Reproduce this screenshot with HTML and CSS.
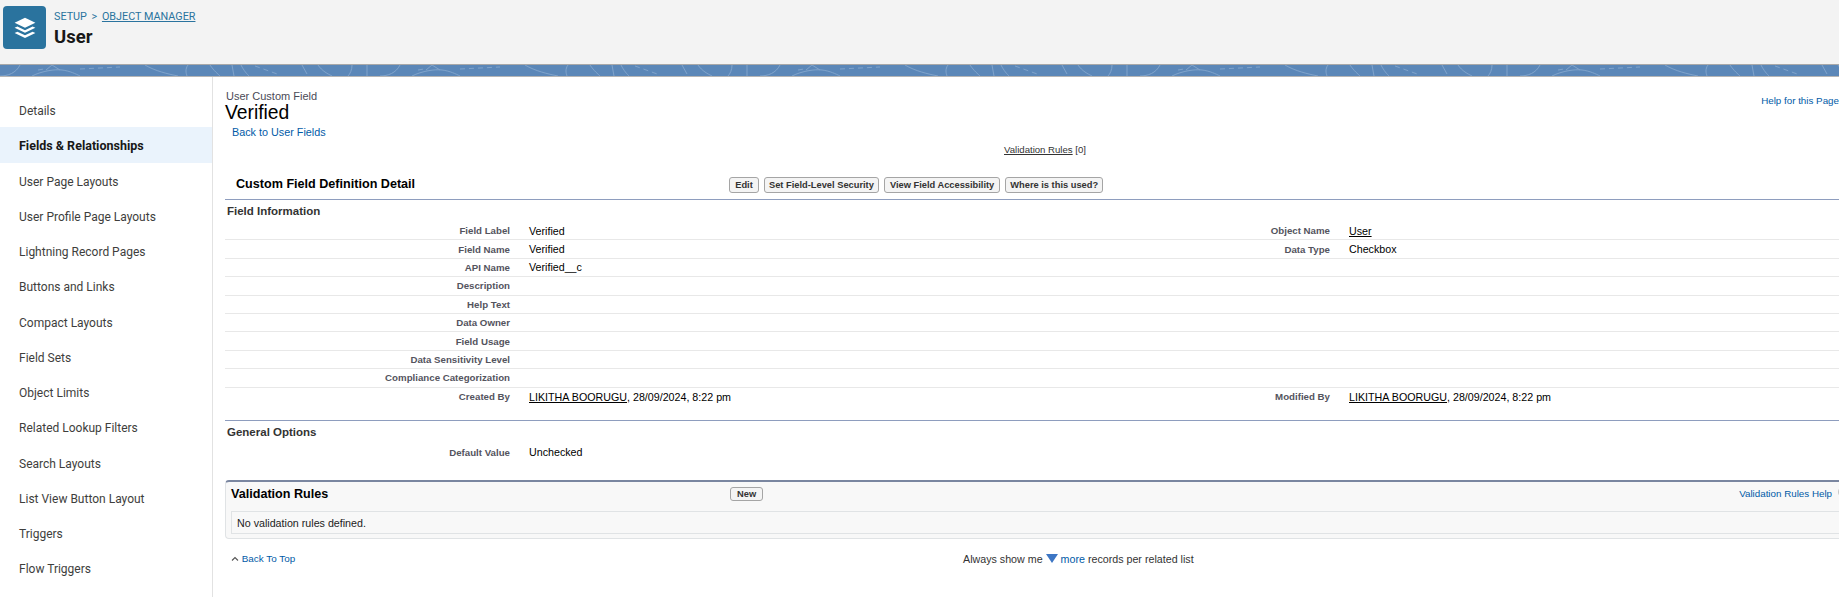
FILE: index.html
```html
<!DOCTYPE html>
<html lang="en">
<head>
  <meta charset="UTF-8">
  <title>User | Object Manager</title>
  <link rel="stylesheet" href="styles.css">
</head>
<body>

  <header class="top">
    <div class="obj-icon">
      <svg viewBox="0 0 24 24" width="26" height="26">
        <path fill="#fff" d="M12 2.6 21.6 7.2 12 11.8 2.4 7.2Z"/>
        <path fill="#fff" d="M5 10.6 12 14 19 10.6 21.6 11.8 12 16.4 2.4 11.8Z"/>
        <path fill="#fff" d="M5 15.4 12 18.8 19 15.4 21.6 16.6 12 21.2 2.4 16.6Z"/>
      </svg>
    </div>
    <div>
      <div class="crumbs">SETUP <span class="gt">&gt;</span> <a href="#">OBJECT MANAGER</a></div>
      <div class="obj-name">User</div>
    </div>
  </header>

  <div class="band">
    <svg width="1839" height="11">
      <defs>
        <pattern id="swirl" width="380" height="11" patternUnits="userSpaceOnUse">
          <g fill="none" stroke="#7fa3cb">
            <path d="M0 11C8 11 16 8 20 0M32 11C42 6 55 4 62 5 70 6 76 9 80 11M46 5 52 0 60 5"/>
            <path d="M38 5 44 4M80 4 120 2" stroke-dasharray="5 4"/>
            <path d="M145 0C155 6 168 9 178 11M188 0C185 4 186 8 187 11M210 0C214 6 218 9 220 11M232 0 234 11M241 0C244 6 247 9 249 11"/>
            <path d="M255 1 280 10" stroke-dasharray="5 4"/>
            <path d="M302 0 307 9M318 0C322 6 328 9 332 11M352 0C352 5 350 9 348 11M367 0V11"/>
          </g>
        </pattern>
      </defs>
      <rect width="1839" height="11" fill="url(#swirl)"/>
    </svg>
  </div>

  <div class="layout">
    <nav class="side">
      <a href="#">Details</a>
      <a href="#" class="active">Fields &amp; Relationships</a>
      <a href="#">User Page Layouts</a>
      <a href="#">User Profile Page Layouts</a>
      <a href="#">Lightning Record Pages</a>
      <a href="#">Buttons and Links</a>
      <a href="#">Compact Layouts</a>
      <a href="#">Field Sets</a>
      <a href="#">Object Limits</a>
      <a href="#">Related Lookup Filters</a>
      <a href="#">Search Layouts</a>
      <a href="#">List View Button Layout</a>
      <a href="#">Triggers</a>
      <a href="#">Flow Triggers</a>
    </nav>

    <main class="main">
      <div class="title-row">
        <div>
          <div class="type">User Custom Field</div>
          <h1>Verified</h1>
        </div>
        <a href="#" class="help">Help for this Page</a>
      </div>
      <a href="#" class="back">Back to User Fields</a>
      <div class="rel-links"><a href="#">Validation Rules</a> [0]</div>

      <div class="detail-head">
        <h2>Custom Field Definition Detail</h2>
        <div class="btns">
          <button class="edit">Edit</button>
          <button>Set Field-Level Security</button>
          <button class="wide">View Field Accessibility</button>
          <button>Where is this used?</button>
        </div>
      </div>

      <h3>Field Information</h3>
      <div class="fields">
        <div class="row">
          <span class="lbl">Field Label</span><span class="val">Verified</span>
          <span class="lbl">Object Name</span><span class="val"><a href="#">User</a></span>
        </div>
        <div class="row">
          <span class="lbl">Field Name</span><span class="val">Verified</span>
          <span class="lbl">Data Type</span><span class="val">Checkbox</span>
        </div>
        <div class="row">
          <span class="lbl">API Name</span><span class="val">Verified__c</span>
          <span class="lbl"></span><span class="val"></span>
        </div>
        <div class="row">
          <span class="lbl">Description</span><span class="val"></span>
          <span class="lbl"></span><span class="val"></span>
        </div>
        <div class="row">
          <span class="lbl">Help Text</span><span class="val"></span>
          <span class="lbl"></span><span class="val"></span>
        </div>
        <div class="row">
          <span class="lbl">Data Owner</span><span class="val"></span>
          <span class="lbl"></span><span class="val"></span>
        </div>
        <div class="row">
          <span class="lbl">Field Usage</span><span class="val"></span>
          <span class="lbl"></span><span class="val"></span>
        </div>
        <div class="row">
          <span class="lbl">Data Sensitivity Level</span><span class="val"></span>
          <span class="lbl"></span><span class="val"></span>
        </div>
        <div class="row">
          <span class="lbl">Compliance Categorization</span><span class="val"></span>
          <span class="lbl"></span><span class="val"></span>
        </div>
        <div class="row last">
          <span class="lbl">Created By</span><span class="val"><a href="#">LIKITHA BOORUGU</a>, 28/09/2024, 8:22 pm</span>
          <span class="lbl">Modified By</span><span class="val"><a href="#">LIKITHA BOORUGU</a>, 28/09/2024, 8:22 pm</span>
        </div>
      </div>

      <h3 class="options">General Options</h3>
      <div class="fields">
        <div class="row last">
          <span class="lbl">Default Value</span><span class="val">Unchecked</span>
          <span class="lbl"></span><span class="val"></span>
        </div>
      </div>

      <section class="related">
        <div class="related-head">
          <h2>Validation Rules</h2>
          <button>New</button>
          <a href="#" class="related-help">Validation Rules Help</a>
          <span class="help-dot"></span>
        </div>
        <div class="related-body">No validation rules defined.</div>
      </section>

      <div class="foot">
        <a href="#" class="to-top">
          <svg class="caret" width="8" height="5" viewBox="0 0 8 5"><path d="M1 4.5 4 1.5 7 4.5" fill="none" stroke="#555" stroke-width="1.1"/></svg>
          Back To Top
        </a>
        <div class="show-more">Always show me <span class="tri"></span> <a href="#">more</a> records per related list</div>
      </div>
    </main>
  </div>

</body>
</html>
```

FILE: styles.css
```css
html, body {
  margin: 0;
  height: 597px;
  overflow: hidden;
  background-color: #fff;
}
body {
  font-family: "Liberation Sans", Arial, sans-serif;
  color: #000;
}
a {
  color: inherit;
}

/* top bar */
.top {
  display: flex;
  align-items: flex-start;
  gap: 8px;
  box-sizing: border-box;
  height: 65px;
  padding: 6px 0 0 3px;
  background-color: #f3f3f3;
  border-bottom: 1px solid #a8a8a8;
  font-family: Roboto, sans-serif;
}
.obj-icon {
  display: flex;
  align-items: center;
  justify-content: center;
  width: 43px;
  height: 43px;
  border-radius: 4px;
  background-color: #2a739e;
}
.crumbs {
  font-size: 10.8px;
  line-height: 16px;
  margin-top: 3px;
  color: #2a739e;
}
.gt {
  margin: 0 2px;
}
.obj-name {
  font-size: 18.5px;
  font-weight: 700;
  line-height: 24px;
  color: #181818;
}
.band {
  height: 11px;
  background-color: #5b87b8;
  border-bottom: 1px solid #b5b5b5;
  overflow: hidden;
}
.band svg {
  display: block;
}

/* layout */
.layout {
  display: flex;
}
.side {
  flex: none;
  box-sizing: border-box;
  width: 213px;
  height: 520px;
  padding-top: 15px;
  border-right: 1px solid #e2e2e2;
  font-family: Roboto, sans-serif;
  font-size: 12px;
}
.side a {
  display: block;
  height: 35.27px;
  line-height: 39.5px;
  padding-left: 19px;
  color: #3e3e3c;
  text-decoration: none;
}
.side a.active {
  font-size: 12.5px;
  font-weight: 700;
  line-height: 37.5px;
  color: #181818;
  background-color: #eaf3fc;
}
.main {
  flex: none;
  width: 1656px;
  margin-left: 12px;
  padding-top: 14px;
  font-size: 11px;
}

/* title */
.title-row {
  display: flex;
  justify-content: space-between;
  width: 1614px;
}
.type {
  font-size: 11px;
  line-height: 11px;
  margin-bottom: 1px;
  color: #4a4a56;
  padding-left: 1px;
}
h1 {
  margin: 0;
  font-size: 19.3px;
  font-weight: 400;
  line-height: 20px;
}
.help {
  font-size: 9.8px;
  color: #015ba7;
  text-decoration: none;
  margin-top: 4px;
}
.back {
  display: block;
  margin: 2px 0 0 7px;
  font-size: 10.8px;
  line-height: 15px;
  color: #015ba7;
  text-decoration: none;
}
.rel-links {
  width: 1640px;
  text-align: center;
  font-size: 9.6px;
  line-height: 12px;
  margin-top: 4px;
  color: #333;
}

/* detail block */
.detail-head {
  display: flex;
  align-items: center;
  height: 22px;
  margin-top: 17px;
  padding-bottom: 4px;
  border-bottom: 1px solid #8e9dbe;
}
.detail-head h2 {
  margin: 0 0 0 11px;
  width: 493px;
  font-size: 12.6px;
  line-height: 18px;
}
.btns {
  display: flex;
  gap: 5px;
  margin-top: 2px;
}
button {
  font-family: "Liberation Sans", Arial, sans-serif;
  font-size: 9.3px;
  font-weight: 700;
  line-height: 12px;
  height: 16px;
  padding: 0 4px;
  color: #333;
  background-color: #f4f4f4;
  border: 1px solid #a5a5a5;
  border-radius: 3px;
}
button.edit {
  min-width: 30px;
}
button.wide {
  padding: 0 5px;
}
h3 {
  margin: 0;
  padding: 3px 0 0 2px;
  font-size: 11.5px;
  font-weight: 700;
  line-height: 16px;
  color: #333;
}
h3.options {
  margin-top: 14px;
  border-top: 1px solid #8e9dbe;
  padding-top: 3px;
}
.fields {
  margin-top: 3px;
}
.row {
  display: grid;
  grid-template-columns: 295px 525px 295px 525px;
  height: 18.4px;
  border-bottom: 1px solid #e8e8e8;
  box-sizing: border-box;
  align-items: center;
}
.row.last {
  border-bottom: none;
}
.lbl {
  text-align: right;
  padding-right: 10px;
  font-size: 9.7px;
  font-weight: 700;
  color: #54545e;
}
.val {
  padding-left: 9px;
  font-size: 10.7px;
}

/* related list */
.related {
  margin-top: 19px;
  height: 59px;
  box-sizing: border-box;
  background-color: #f8f8f8;
  border: 1px solid #e0e3e5;
  border-top: 2px solid #7a86a0;
  border-radius: 4px 0 0 4px;
  border-right: none;
  padding: 0 0 4px 5px;
}
.related-head {
  display: flex;
  align-items: center;
  box-sizing: border-box;
  height: 29px;
  padding-bottom: 6px;
  position: relative;
}
.related-head h2 {
  margin: 0;
  width: 499px;
  font-size: 12.6px;
}
.related-head button {
  height: 14px;
  padding: 0 6px;
  line-height: 10px;
}
.related-help {
  margin-left: 976px;
  font-size: 9.8px;
  color: #015ba7;
  text-decoration: none;
}
.related-body {
  box-sizing: border-box;
  height: 23px;
  line-height: 22px;
  padding-left: 5px;
  font-size: 10.7px;
  background-color: #f8f8f8;
  border: 1px solid #e0e3e5;
  border-right: none;
  color: #222;
}
.help-dot {
  position: absolute;
  left: 1607px;
  top: 4px;
  width: 10px;
  height: 10px;
  border: 1.5px solid #c4c4c4;
  border-radius: 50%;
}

/* footer */
.foot {
  display: flex;
  margin-top: 13px;
  font-size: 9.9px;
  line-height: 14px;
}
.to-top {
  width: 738px;
  padding-left: 6px;
  box-sizing: border-box;
  color: #015ba7;
  text-decoration: none;
}
.caret {
  margin-bottom: 1px;
}
.show-more {
  color: #333;
  font-size: 10.7px;
}
.show-more a {
  color: #015ba7;
  text-decoration: none;
}
.tri {
  display: inline-block;
  border-left: 6px solid transparent;
  border-right: 6px solid transparent;
  border-top: 9px solid #3d76c4;
}
```
